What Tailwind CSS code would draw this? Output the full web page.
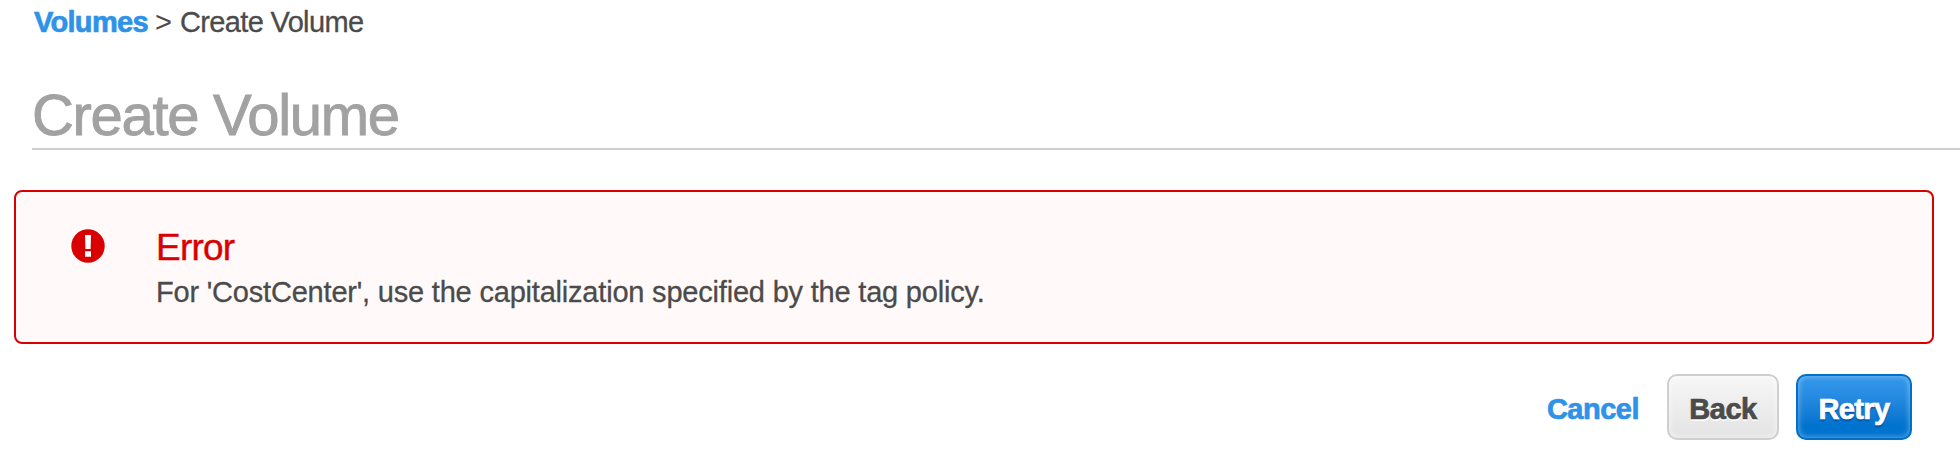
<!DOCTYPE html>
<html lang="en">
<head>
<meta charset="utf-8">
<title>Create Volume</title>
<script src="https://cdn.jsdelivr.net/npm/@tailwindcss/browser@4"></script>
</head>
<body class="bg-white text-[#4b4b4b] text-[29px] leading-8 overflow-hidden h-[472px] font-['Liberation_Sans',Arial,sans-serif]">
  <header class="pl-8 pt-1.5">
    <nav class="flex h-8 pl-[2px] whitespace-pre">
      <a class="w-[121px] font-bold text-[#2e93e8] tracking-[-0.7px] [-webkit-text-stroke:0.7px_#2e93e8]">Volumes</a>
      <span class="w-[25px] tracking-[-0.3px]">&gt;</span>
      <span class="tracking-[-0.65px] [-webkit-text-stroke:0.3px_#4b4b4b]">Create Volume</span>
    </nav>
    <h1 class="mt-[45px] h-[67px] border-b-2 border-[#cfcfcf] text-[58px] leading-[63px] text-[#a2a2a2] tracking-[-1.3px] [-webkit-text-stroke:0.9px_#a2a2a2]">Create Volume</h1>
  </header>
  <main class="pl-3.5">
    <section class="mt-10 flex h-[154px] w-[1920px] rounded-lg border-2 border-[#d80000] bg-[#fffaf9] pl-[55px] pt-9">
      <svg class="mt-[1px] h-[34px] w-[34px] shrink-0" viewBox="0 0 34 34">
        <circle cx="17" cy="17" r="16.7" fill="#d80000"/>
        <path d="M14 6h6l-.4 14h-5.2zM14 22.3h6v5.4h-6z" fill="#fff"/>
      </svg>
      <div class="pl-[51px]">
        <h2 class="text-[37px] leading-10 text-[#d80000] tracking-[-0.8px] [-webkit-text-stroke:0.4px_#d80000]">Error</h2>
        <p class="mt-1.5 leading-9 whitespace-nowrap tracking-[-0.2px] [-webkit-text-stroke:0.3px_#4b4b4b]">For 'CostCenter', use the capitalization specified by the tag policy.</p>
      </div>
    </section>
    <div class="mt-[30px] flex w-[1898px] items-center justify-end font-bold">
      <a class="mr-[28px] pt-[3px] text-[#2e93e8] tracking-[-0.5px] [-webkit-text-stroke:0.7px_#2e93e8]">Cancel</a>
      <button class="mr-[17px] h-[66px] w-[112px] rounded-[10px] border-2 border-[#cfcfcf] bg-linear-to-b from-[#f7f7f7] to-[#e3e3e3] pt-[3px] tracking-[-0.5px] shadow-[inset_0_0_6px_rgba(255,255,255,0.7)] [text-shadow:0_2px_0_#fff] [-webkit-text-stroke:0.7px_#4b4b4b]">Back</button>
      <button class="h-[66px] w-[116px] rounded-[10px] border-2 border-[#0070c8] bg-linear-to-b from-[#2f93e8] from-15% to-[#0073cf] to-80% pt-[3px] tracking-[-0.6px] text-white shadow-[inset_0_0_6px_rgba(255,255,255,0.45)] [text-shadow:0_2px_2px_rgba(0,40,110,0.55)] [-webkit-text-stroke:0.7px_#fff]">Retry</button>
    </div>
  </main>
</body>
</html>
